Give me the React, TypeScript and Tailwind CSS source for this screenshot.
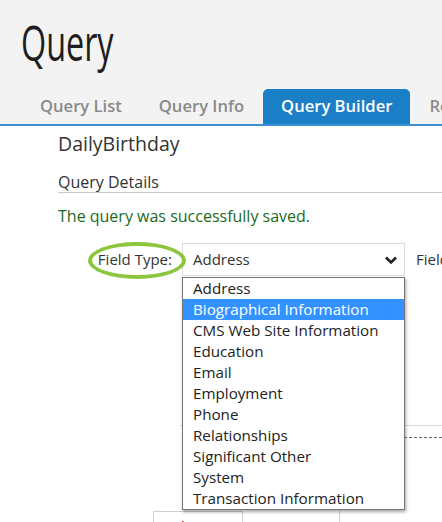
import React from "react";

const options = [
  "Address",
  "Biographical Information",
  "CMS Web Site Information",
  "Education",
  "Email",
  "Employment",
  "Phone",
  "Relationships",
  "Significant Other",
  "System",
  "Transaction Information",
];

const Tab = ({ label, active }: { label: string; active?: boolean }) => (
  <div
    className={
      active
        ? "px-[18px] h-[35px] flex items-center rounded-t-[5px] bg-[#1a7fc6] text-white shrink-0"
        : "px-[18px] h-[35px] flex items-center text-[#8a8a8a] shrink-0"
    }
  >
    <span className="text-[16.6px] font-semibold whitespace-nowrap">{label}</span>
  </div>
);

export default function App() {
  return (
    <div className="w-[442px] h-[522px] overflow-hidden bg-white text-[#333] relative" style={{ fontFamily: '"Open Sans", "Noto Sans", sans-serif' }}>
      {/* page header */}
      <div className="bg-[#f3f3f3] border-b-2 border-[#3d8fd1]">
        <div className="pl-[21px] pt-[18px] h-[89px]">
          <h1 className="text-[49px] leading-none font-medium text-[#1e1e1e] scale-x-[0.66] origin-left">Query</h1>
        </div>
        <div className="flex items-end pl-[22px] gap-[1px]">
          <Tab label="Query List" />
          <Tab label="Query Info" />
          <Tab label="Query Builder" active />
          <Tab label="Results" />
        </div>
      </div>

      <div className="pl-[58px] pt-[6px]">
        <div className="text-[19.5px] leading-[24px]">DailyBirthday</div>
        <div className="mt-[17px] border-b border-[#c8c8c8]">
          <div className="text-[16px] leading-[19px]">Query Details</div>
        </div>
        <div className="mt-[13px] text-[16px] leading-[20px] text-[#1b6a1b]">The query was successfully saved.</div>
      </div>

      {/* field type row */}
      <div className="flex items-center mt-[17px] h-[33px] relative">
        <div className="absolute left-[88px] top-[-1px] w-[98px] h-[37px] rounded-[50%] border-[4px] border-[#8cc63f]" />
        <div className="w-[182px] shrink-0 pr-[10px] text-right text-[15px]">Field Type:</div>
        <div className="w-[223px] shrink-0 h-[33px] border border-[#dcdcdc] flex items-center justify-between pl-[10px] pr-[6px] text-[15px]">
          <span>Address</span>
          <svg width="14" height="10" viewBox="0 0 14 10">
            <path d="M2 2.5 L7 7.5 L12 2.5" fill="none" stroke="#222" strokeWidth="2.6" />
          </svg>
        </div>
        <div className="ml-[11px] shrink-0 text-[15px] whitespace-nowrap">Field Name:</div>
      </div>

      {/* content behind the open list */}
      <div className="ml-[180px] mt-[149px] border-t border-[#d6d6d6] h-[12px]" />
      <div className="ml-[404px] border-t border-dashed border-[#666]" />
      <div className="flex ml-[153px] mt-[73px]">
        <div className="w-[90px] h-[20px] border border-[#d0d0d0] border-b-0 text-[15px] text-center pt-[3px]">Change</div>
        <div className="w-[97px] h-[20px] border-r border-[#d0d0d0]" />
      </div>

      {/* open dropdown list */}
      <div className="absolute left-[182px] top-[277px] w-[223px] bg-white border border-[#767676] shadow-[1px_2px_3px_rgba(0,0,0,0.35)]">
        {options.map((o, i) => (
          <div
            key={o}
            className={
              i === 1
                ? "h-[21px] leading-[21px] pl-[10px] text-[15.2px] bg-[#3392ff] text-white"
                : "h-[21px] leading-[21px] pl-[10px] text-[15.2px] text-[#222]"
            }
          >
            {o}
          </div>
        ))}
      </div>
    </div>
  );
}
